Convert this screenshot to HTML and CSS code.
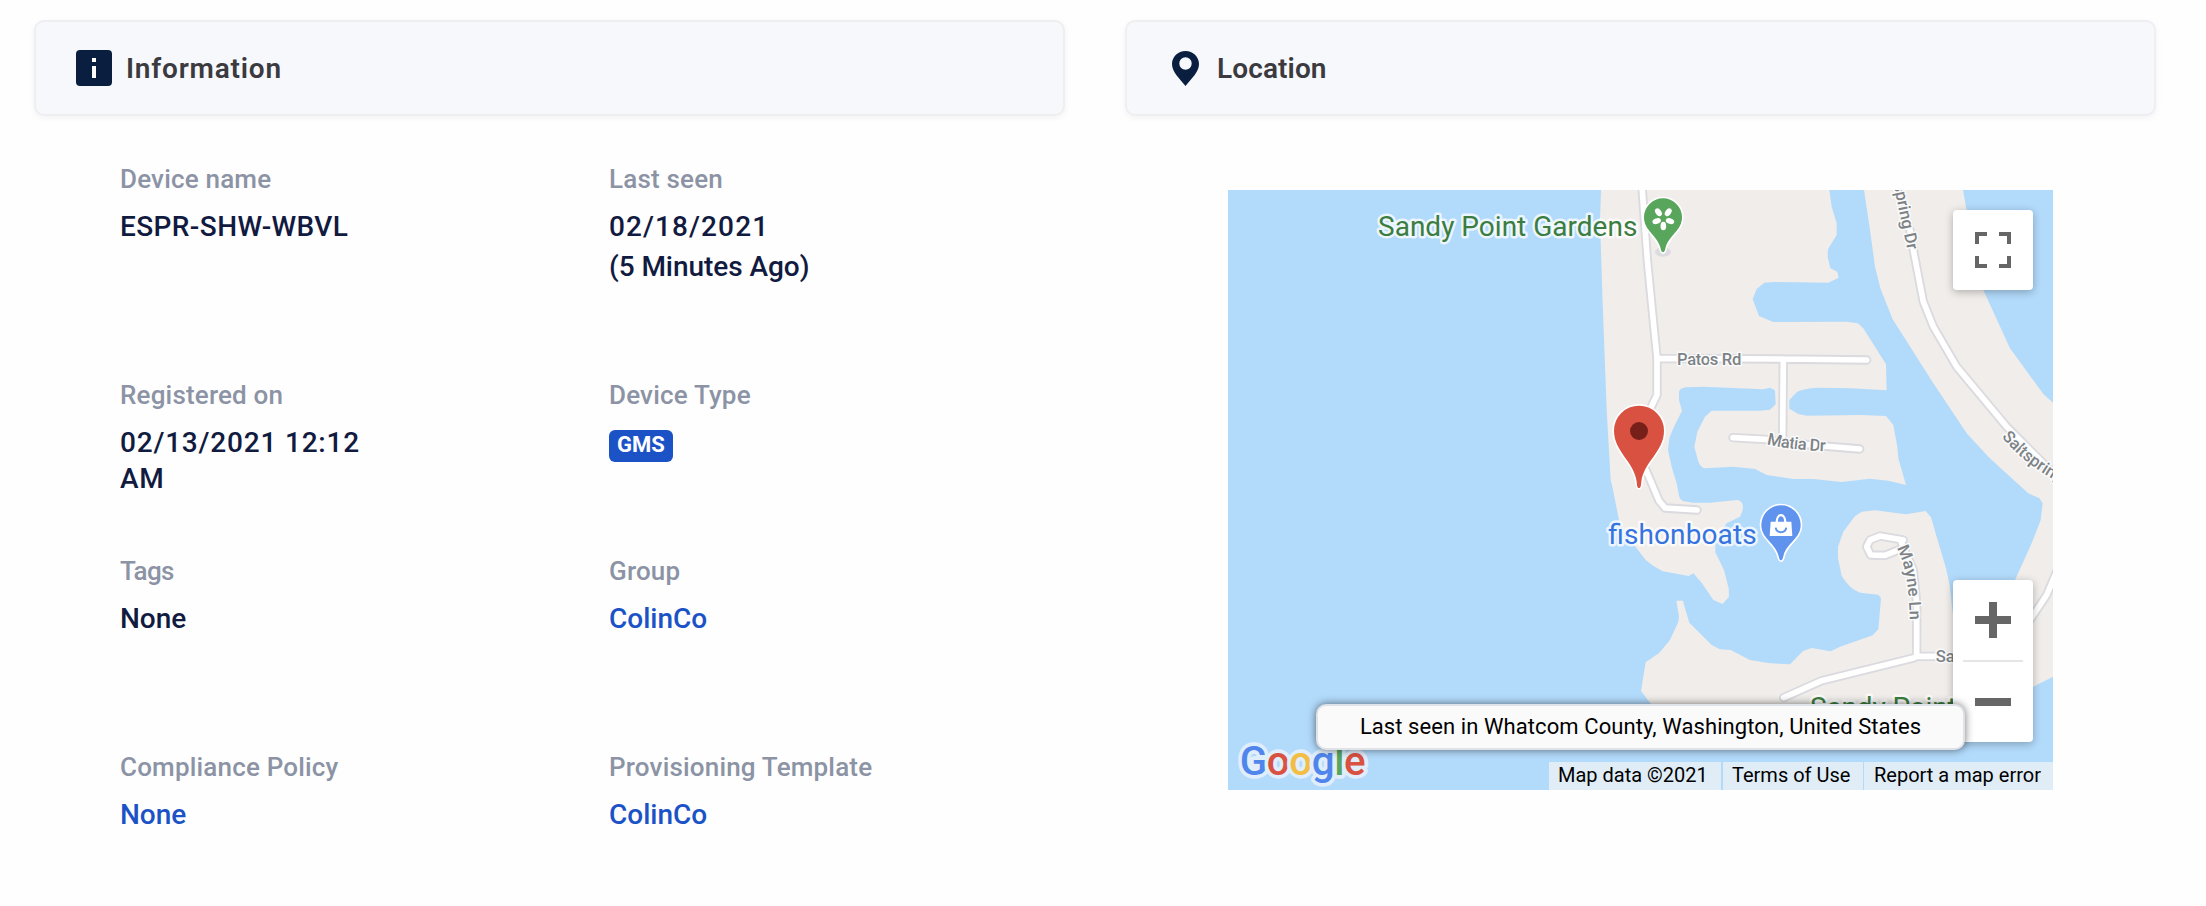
FILE: index.html
```html
<!DOCTYPE html>
<html lang="en">
<head>
<meta charset="utf-8">
<title>Device details</title>
<link rel="stylesheet" href="styles.css">
</head>
<body>
<main class="page">
  <section class="panel">
    <header class="panel-header">
      <svg class="icon-info" viewBox="0 0 36 36"><rect width="36" height="36" rx="4" fill="#0a1f40"/><path d="M16 8h4v4h-4zM16 16h4v12h-4z" fill="#fff"/></svg>
      <h2 class="panel-title wide">Information</h2>
    </header>
    <dl class="fields">
      <div class="field"><dt>Device name</dt><dd class="code">ESPR-SHW-WBVL</dd></div>
      <div class="field"><dt>Last seen</dt><dd class="date">02/18/2021</dd><dd class="ago">(5 Minutes Ago)</dd></div>
      <div class="field"><dt>Registered on</dt><dd class="stamp">02/13/2021 12:12 AM</dd></div>
      <div class="field"><dt>Device Type</dt><dd class="type"><span class="badge">GMS</span></dd></div>
      <div class="field"><dt class="tight">Tags</dt><dd>None</dd></div>
      <div class="field"><dt>Group</dt><dd><a class="link">ColinCo</a></dd></div>
      <div class="field"><dt>Compliance Policy</dt><dd><a class="link">None</a></dd></div>
      <div class="field"><dt>Provisioning Template</dt><dd><a class="link">ColinCo</a></dd></div>
    </dl>
  </section>

  <section class="panel">
    <header class="panel-header location">
      <svg class="icon-pin" viewBox="0 0 27 35"><path fill="#0a1f40" fill-rule="evenodd" d="M13.5 0C21 0 27 5.700 27 13C27 21 19.500 27.500 13.500 35C7.500 27.500 0 21 0 13C0 5.700 6 0 13.500 0ZM13.500 6.300a6.200 6.200 0 1 0 0 12.400a6.200 6.200 0 1 0 0-12.400Z"/></svg>
      <h2 class="panel-title">Location</h2>
    </header>
    <div class="map">
      <svg class="map-canvas" viewBox="-996 60 2475 1800">
        <rect class="water" x="-996" y="60" width="2475" height="1800"/>
        <path class="land" d="M123 60L120 150L128 400L140 720L152 930L158 955L178 1055L215 1115L257 1170Q280 1190 308 1204L386 1218L400 1210L425 1238L460 1290L488 1302L507 1280L506 1255L492 1200L466 1147V1110L500 1060L540 1040Q549 1025 549 1010Q547 990 530 990L450 998L400 998L368 993Q360 988 358 980L350 940L335 890L324 840L328 805L340 775L366 722L357 690V665Q360 655 378 652L430 650L610 658L630 653L645 661L647 703L630 719L600 722L455 722L435 740L412 785L403 830L415 875Q422 893 435 895L520 890L585 897L620 915L700 927H760L845 936L930 926L985 932L1038 945L1015 865L1012 830L1000 765L978 738L900 735L740 737L715 732L688 716V690L712 665Q725 657 770 653L870 655L980 661L978 583L945 530L910 475L893 460L860 455L640 456L597 438L578 388L590 357L613 338L640 336L805 338L836 323L832 305L811 295L803 260L804 238L830 195V160L815 110L808 60Z"/>
        <path class="land" d="M912 60L930 180L945 290L960 350L965 365L998 448L1120 640L1220 790L1285 860L1328 900L1405 970L1438 985L1448 1000L1442 1050L1415 1120L1365 1230L1300 1330H1178L1170 1250L1158 1195L1130 1100L1113 1042L1097 1023L1038 1033L945 1021L905 1025L885 1038L850 1085L834 1130V1165L845 1218Q870 1258 900 1268L955 1274L963 1285L955 1378L938 1396L840 1430L812 1444L755 1434L730 1442L690 1483L630 1480L570 1470L512 1440L480 1438L455 1425L388 1358L375 1315L369 1292H349L357 1340L355 1355L330 1410L298 1448L257 1477L243 1563L273 1602L320 1690L1150 1700L1300 1600L1420 1550L1479 1520V698L1450 672L1350 535L1270 360L1218 110L1209 60Z"/>
        <g class="road-edge">
          <path d="M246 50L262 270L291 565L291 675L262 735L240 860L260 905L297 992L315 1014L411 1020M291 565L670 567L920 570M670 567L668 800M519 803L615 808L720 822L899 837M1050 180L1062 250L1090 395L1120 470L1190 590L1340 770L1500 930M1030 1110L960 1098L930 1110L920 1130L932 1155L975 1156L1020 1138M1020 1108L1060 1200L1070 1300V1458M671 1583L785 1532L1060 1464L1070 1459H1200M1490 1205L1460 1275L1410 1350L1360 1400"/>
        </g>
        <g class="road">
          <path d="M246 50L262 270L291 565L291 675L262 735L240 860L260 905L297 992L315 1014L411 1020M291 565L670 567L920 570M670 567L668 800M519 803L615 808L720 822L899 837M1050 180L1062 250L1090 395L1120 470L1190 590L1340 770L1500 930M1030 1110L960 1098L930 1110L920 1130L932 1155L975 1156L1020 1138M1020 1108L1060 1200L1070 1300V1458M671 1583L785 1532L1060 1464L1070 1459H1200M1490 1205L1460 1275L1410 1350L1360 1400"/>
        </g>
        <defs>
          <path id="spring" d="M960 -260L1003 55L1042 241"/>
          <path id="salt" d="M1325 800Q1380 870 1476 926L1640 1016"/>
          <path id="mayne" d="M1010 1134Q1052 1210 1050 1400"/>
          <path id="matia" d="M620 822Q700 843 850 846"/>
        </defs>
        <g class="street">
          <text x="351" y="584" textLength="193">Patos Rd</text>
          <text><textPath href="#matia" textLength="178">Matia Dr</textPath></text>
          <text text-anchor="end"><textPath href="#spring" startOffset="100%">Saltspring Dr</textPath></text>
          <text><textPath href="#salt">Saltspring Dr</textPath></text>
          <text><textPath href="#mayne" textLength="222">Mayne Ln</textPath></text>
          <text x="1127" y="1475">Sandy</text>
        </g>
        <g class="place park">
          <text x="-546" y="198" textLength="778">Sandy Point Gardens</text>
          <text x="750" y="1641" textLength="440">Sandy Point</text>
        </g>
        <text class="place shop" x="145" y="1121" textLength="445">fishonboats</text>

        <ellipse cx="309" cy="246" rx="24" ry="14" fill="#dcdbdf"/>
        <g class="pin">
          <path fill="#58a55c" d="M309 247C304 247 303 240 301 232C290 195 252 182 252 142A57 57 0 0 1 366 142C366 182 328 195 317 232C315 240 314 247 309 247Z"/>
          <path fill="#5f93ee" d="M663 1171C658 1171 657 1162 655 1155C644 1118 604 1105 604 1065A59 59 0 0 1 722 1065C722 1105 682 1118 671 1155C669 1162 668 1171 663 1171Z"/>
          <path fill="#d95140" d="M237 954C231 954 231 944 230 935C223 875 162 845 162 782A75 75 0 0 1 312 782C312 845 251 875 244 935C243 944 243 954 237 954Z"/>
        </g>
        <circle cx="237" cy="783" r="27" fill="#77201a"/>
        <g fill="#fff" transform="translate(310 147)">
          <ellipse rx="8.500" ry="13" cy="21"/>
          <ellipse rx="8.500" ry="13" cy="21" transform="rotate(72)"/>
          <ellipse rx="8.500" ry="13" cy="-25" transform="rotate(-36)"/>
          <ellipse rx="8.500" ry="13" cy="-25" transform="rotate(36)"/>
          <ellipse rx="8.500" ry="13" cy="21" transform="rotate(-72)"/>
        </g>
        <path d="M632 1055H694L697 1098H629Z" fill="#fff"/>
        <path d="M650 1058C650 1028 676 1028 676 1058" fill="none" stroke="#fff" stroke-width="7"/>
        <path d="M647 1073C650 1091 676 1091 679 1073" fill="none" stroke="#5f93ee" stroke-width="6"/>

        <text class="brand" x="-961" y="1816" textLength="378"><tspan fill="#5086ec">G</tspan><tspan fill="#d95140">o</tspan><tspan fill="#f2bd42">o</tspan><tspan fill="#5086ec">g</tspan><tspan fill="#58a55c">l</tspan><tspan fill="#d95140">e</tspan></text>
      </svg>
      <button class="control fullscreen" aria-label="Fullscreen"><svg viewBox="0 0 36 36"><path d="M2 12V2H12M24 2H34V12M34 24V34H24M12 34H2V24"/></svg></button>
      <div class="control zoom">
        <button aria-label="Zoom in"><svg viewBox="0 0 36 36"><path class="thick" d="M18 0V36M0 18H36"/></svg></button>
        <hr>
        <button aria-label="Zoom out"><svg viewBox="0 0 36 36"><path class="thick" d="M0 18H36"/></svg></button>
      </div>
      <div class="place-tip">Last seen in Whatcom County, Washington, United States</div>
      <div class="credits"><span class="c-data">Map data ©2021</span><span class="c-terms">Terms of Use</span><span class="c-report">Report a map error</span></div>
    </div>
  </section>
</main>
</body>
</html>
```

FILE: styles.css
```css
* { box-sizing: border-box; }
body { margin: 0; background: #fefefe; font-family: Roboto, "Noto Sans", sans-serif; }
.page { display: grid; grid-template-columns: 1031px 1031px; column-gap: 60px; padding: 20px 0 0 34px; height: 906px; overflow: hidden; }
.panel-header {
  display: flex; align-items: center; gap: 14px;
  height: 96px; padding: 0 40px;
  background: #f7f8fc; border: 2px solid #eeeff1; border-radius: 10px;
  box-shadow: 0 2px 6px rgba(0, 0, 0, .05);
}
.panel-header.location { padding-left: 45px; gap: 18px; }
.icon-info { width: 36px; height: 36px; }
.icon-pin { width: 27px; height: 35px; }
.panel-title { margin: 0; padding-top: 2px; font-size: 28px; line-height: 36px; font-weight: 600; letter-spacing: .1px; color: #3a3a3f; }
.panel-title.wide { letter-spacing: .8px; }

.fields {
  display: grid; grid-template-columns: 489px 489px; grid-template-rows: 216px 176px 196px auto;
  margin: 0; padding: 45px 0 0 86px;
}
dt { font-size: 26px; line-height: 36px; font-weight: 500; letter-spacing: .18px; color: #8b93a5; }
dt.tight { letter-spacing: -.6px; }
dd { margin: 12px 0 0; max-width: 260px; font-size: 28px; line-height: 36px; font-weight: 500; color: #111a3f; }
.code { letter-spacing: .4px; }
.date { letter-spacing: 1.1px; }
.ago { margin-top: 4px; letter-spacing: -.05px; }
.stamp { letter-spacing: .8px; }
.type { margin-top: 17px; display: flex; }
.badge { padding: 0 8px; height: 32px; border-radius: 6px; background: #1b53c6; color: #fff; font-size: 22px; line-height: 29px; font-weight: 700; }
.link { color: #1b53c6; }

.map { position: relative; width: 825px; height: 600px; margin: 74px 0 0 103px; overflow: hidden; }
.map-canvas { display: block; width: 825px; height: 600px; }
.water { fill: #b2dafb; }
.land { fill: #f0edea; }
.road-edge, .road { fill: none; stroke-linecap: round; stroke-linejoin: round; }
.road-edge { stroke: #dadadf; stroke-width: 28px; }
.road { stroke: #fff; stroke-width: 17px; }
.street, .place, .brand { paint-order: stroke; stroke-linejoin: round; }
.street { font-size: 50px; font-weight: 500; fill: #7d8286; stroke: #fafafa; stroke-width: 9px; }
.place { font-size: 84px; stroke: rgba(255, 255, 255, .75); stroke-width: 15px; }
.park { fill: #3b7d40; }
.shop { fill: #3473e0; }
.pin { stroke: #fff; stroke-width: 10px; paint-order: stroke; }
.brand { font-size: 121px; font-weight: 500; stroke: #e0eefb; stroke-width: 22px; }

.control { position: absolute; right: 20px; width: 80px; background: #fff; border-radius: 4px; box-shadow: 0 2px 8px rgba(0, 0, 0, .28); }
.control svg { width: 36px; height: 36px; fill: none; stroke: #666; stroke-width: 4px; }
.control .thick { stroke-width: 8px; }
button { display: flex; align-items: center; justify-content: center; padding: 0; border: 0; background: none; }
.fullscreen { top: 20px; height: 80px; }
.zoom { top: 390px; height: 162px; }
.zoom button { width: 80px; height: 80px; }
.zoom hr { height: 2px; width: 60px; margin: 0 auto; border: 0; background: #e6e6e6; }

.place-tip {
  position: absolute; left: 88px; top: 514px; width: 649px; height: 46px;
  border: 2px solid #dfe2e6; border-radius: 10px; background: #fafafa;
  box-shadow: 0 0 8px rgba(0, 0, 0, .55);
  color: #000; font-size: 22px; line-height: 41px; letter-spacing: .08px; text-align: center;
}
.credits { position: absolute; right: 0; bottom: 0; display: flex; gap: 1px; height: 28px; font-size: 20px; line-height: 27px; color: #000; white-space: nowrap; }
.credits span { background: #e0edf7; }
.c-data { width: 172px; padding-left: 9px; margin-right: 1px; }
.c-terms { width: 140px; padding-left: 9px; }
.c-report { width: 189px; padding-left: 10px; }
```
